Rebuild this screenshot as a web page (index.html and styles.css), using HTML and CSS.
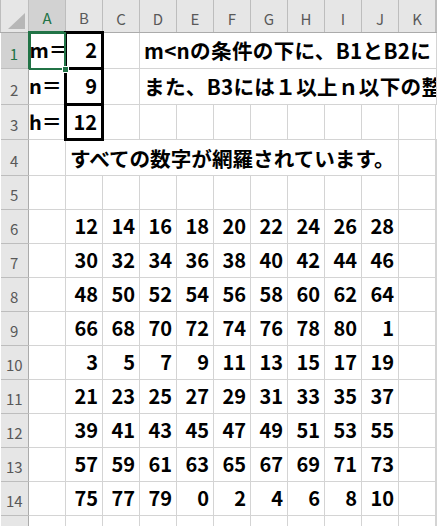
FILE: index.html
```html
<!DOCTYPE html>
<html lang="ja">

<head>
  <meta charset="UTF-8">
  <title>Sheet1</title>
  <link rel="stylesheet" href="styles.css">
</head>

<body>
  <table class="sheet">
    <colgroup>
      <col class="col-head">
      <col class="col-cell"><col class="col-cell"><col class="col-cell"><col class="col-cell">
      <col class="col-cell"><col class="col-cell"><col class="col-cell"><col class="col-cell">
      <col class="col-cell"><col class="col-cell"><col class="col-cell">
      <col>
    </colgroup>
    <thead>
      <tr class="head-row">
        <th class="corner">
          <div class="corner-inner">
            <svg width="17" height="16" viewBox="0 0 17 16"><polygon points="17,0 17,16 0,16" fill="#b7b7b7"/></svg>
          </div>
        </th>
        <th class="active-col">A</th><th>B</th><th>C</th><th>D</th><th>E</th><th>F</th>
        <th>G</th><th>H</th><th>I</th><th>J</th><th>K</th><th></th>
      </tr>
    </thead>
    <tbody>
      <tr class="r-tall">
        <th class="row-num active-row">1</th>
        <td class="label selected">m＝</td>
        <td class="num boxed">2</td>
        <td></td>
        <td class="text wide" colspan="9">m&lt;nの条件の下に、B1とB2に</td>
      </tr>
      <tr class="r-tall">
        <th class="row-num">2</th>
        <td class="label">n＝</td>
        <td class="num boxed">9</td>
        <td></td>
        <td class="text wide" colspan="9">また、B3には１以上ｎ以下の整</td>
      </tr>
      <tr class="r-mid">
        <th class="row-num">3</th>
        <td class="label">h＝</td>
        <td class="num boxed">12</td>
        <td></td><td></td><td></td><td></td><td></td><td></td><td></td><td></td><td></td>
      </tr>
      <tr class="r-tall">
        <th class="row-num">4</th>
        <td></td>
        <td class="text" colspan="9">すべての数字が網羅されています。</td>
        <td></td><td></td>
      </tr>
      <tr class="r-short">
        <th class="row-num">5</th>
        <td></td><td></td><td></td><td></td><td></td><td></td><td></td><td></td><td></td><td></td><td></td><td></td>
      </tr>
    </tbody>
    <tbody id="grid"></tbody>
  </table>

  <script>
    var rows = [
      [12, 14, 16, 18, 20, 22, 24, 26, 28],
      [30, 32, 34, 36, 38, 40, 42, 44, 46],
      [48, 50, 52, 54, 56, 58, 60, 62, 64],
      [66, 68, 70, 72, 74, 76, 78, 80, 1],
      [3, 5, 7, 9, 11, 13, 15, 17, 19],
      [21, 23, 25, 27, 29, 31, 33, 35, 37],
      [39, 41, 43, 45, 47, 49, 51, 53, 55],
      [57, 59, 61, 63, 65, 67, 69, 71, 73],
      [75, 77, 79, 0, 2, 4, 6, 8, 10]
    ];

    var grid = document.getElementById('grid');
    var html = '';
    rows.forEach(function (vals, i) {
      html += '<tr class="r-short"><th class="row-num">' + (i + 6) + '</th><td></td>';
      for (var c = 0; c < 9; c++) {
        html += '<td class="num">' + vals[c] + '</td>';
      }
      html += '<td></td><td></td></tr>';
    });
    // row 15 is only partly in view, its number is below the edge
    html += '<tr class="r-short"><th class="row-num"></th>' + new Array(13).join('<td></td>') + '</tr>';
    grid.innerHTML = html;
  </script>
</body>

</html>
```

FILE: styles.css
```css
html,
body {
  margin: 0;
  height: 100%;
  overflow: hidden;
  background-color: #ffffff;
}

body {
  font-family: "Noto Sans CJK JP", "Noto Sans", sans-serif;
  color: #000;
}

.sheet {
  border-collapse: collapse;
  table-layout: fixed;
  width: 437px;
}

.col-head {
  width: 28px;
}

.col-cell {
  width: 37px;
}

th,
td {
  padding: 0;
  border: 1px solid #d4d4d4;
  overflow: hidden;
  white-space: nowrap;
}

/* column / row headers */
.head-row {
  height: 32px;
}

.head-row th {
  background-color: #e6e6e6;
  border-color: #bdbdbd;
  border-top: none;
  border-bottom-color: #ababab;
  color: #595959;
  font-weight: normal;
  font-size: 15px;
  vertical-align: bottom;
  padding-bottom: 3px;
}

.corner-inner {
  display: flex;
  justify-content: flex-end;
  align-items: flex-end;
  padding-right: 3px;
}

.head-row th.active-col {
  background-color: #d2d2d2;
  color: #217346;
  border-bottom: 2px solid #217346;
}

.row-num {
  background-color: #e6e6e6;
  border-color: #bdbdbd;
  border-left: none;
  border-right-color: #ababab;
  color: #595959;
  font-weight: normal;
  font-size: 15px;
  text-align: center;
  vertical-align: bottom;
  padding-bottom: 4px;
}

.row-num.active-row {
  background-color: #d2d2d2;
  color: #217346;
  border-right: 2px solid #217346;
}

.r-tall {
  height: 36px;
}

.r-mid {
  height: 35px;
}

.r-short {
  height: 34px;
}

/* cells */
td {
  font-size: 20px;
  font-weight: bold;
  line-height: 24px;
  vertical-align: middle;
}

.label {
  text-align: right;
  padding-right: 3px;
  overflow: visible;
}

.num {
  text-align: right;
  padding-right: 4px;
}

.boxed {
  border: 3px solid #000;
}

.text {
  padding-left: 4px;
  text-align: left;
  max-width: 0;
  font-size: 20.6px;
}

.text.wide {
  letter-spacing: 0.3px;
}

.selected {
  position: relative;
}

.selected::after {
  content: "";
  position: absolute;
  left: -1px;
  top: -1px;
  right: -2px;
  bottom: -2px;
  border: 2px solid #217346;
}

.selected::before {
  content: "";
  position: absolute;
  right: -5px;
  bottom: -5px;
  width: 5px;
  height: 5px;
  background-color: #217346;
  border: 1px solid #fff;
  z-index: 2;
}
```
